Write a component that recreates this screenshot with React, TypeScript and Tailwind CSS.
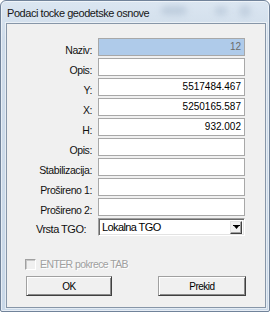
import React from "react";

const rows: { label: string; value?: string; tone?: "sel" }[] = [
  { label: "Naziv:", value: "12", tone: "sel" },
  { label: "Opis:" },
  { label: "Y:", value: "5517484.467" },
  { label: "X:", value: "5250165.587" },
  { label: "H:", value: "932.002" },
  { label: "Opis:" },
  { label: "Stabilizacija:" },
  { label: "Prošireno 1:" },
  { label: "Prošireno 2:" },
];

function ClassicButton({ children, className }: { children: React.ReactNode; className: string }) {
  return (
    <div
      className={`flex h-[20px] items-center justify-center border border-t-[#a0a0a0] border-l-[#a0a0a0] border-r-[#404040] border-b-[#404040] bg-[#f0f0f0] text-[10px] tracking-[-0.5px] text-black shadow-[inset_1px_1px_0_#ffffff,inset_-1px_-1px_0_#8a8a8a] ${className}`}
    >
      {children}
    </div>
  );
}

export default function App() {
  return (
    <div className="h-[313px] w-[272px] bg-white font-['Liberation_Sans',Arial,sans-serif]">
      <div className="relative flex h-[312px] w-[270px] flex-col rounded-t-[6px] rounded-b-[2px] border border-[#71839a] bg-[linear-gradient(180deg,#dbe6f1_0%,#cfdcea_12%,#c9d8e8_100%)] pb-[3px] pl-[5px] pr-[3px] shadow-[inset_0_0_0_1px_rgba(255,255,255,0.55)]">
        {/* blurred glass smudges */}
        <span className="absolute left-[160px] top-[5px] h-[9px] w-[26px] rounded-full bg-[#aebfd2] opacity-60 blur-[3px]" />
        <span className="absolute left-[214px] top-[6px] h-[8px] w-[12px] rounded-full bg-[#aebfd2] opacity-60 blur-[3px]" />
        <span className="absolute left-[238px] top-[4px] h-[12px] w-[12px] rounded-full bg-[#b3c3d5] opacity-60 blur-[3px]" />

        <div className="relative flex h-[22px] items-start pl-[1px] pt-[4px] text-[11px] leading-[16px] tracking-[-0.45px] text-[#161616]">
          Podaci tocke geodetske osnove
        </div>

        <div className="flex flex-1 flex-col border border-[#8796a8] bg-[#f0f0f0] shadow-[0_0_0_1px_rgba(255,255,255,0.5)]">
          <div className="flex flex-col gap-[2px] pt-[14px]">
            {rows.map((r, i) => (
              <div key={i} className="flex h-[18px]">
                <div className="w-[91px] pr-[6px] pt-[4px] text-right text-[10.5px] leading-[16px] tracking-[-0.4px] text-[#111]">
                  {r.label}
                </div>
                <div
                  className={`h-[18px] w-[147px] border border-[#a8a8a8] px-[3px] text-right text-[10px] leading-[16px] ${
                    r.tone === "sel" ? "bg-[#afcbea] text-[#6b6b6b]" : "bg-white text-black"
                  }`}
                >
                  {r.value}
                </div>
              </div>
            ))}
            <div className="flex h-[18px]">
              <div className="w-[91px] pl-[29px] pt-[3px] text-[11px] leading-[16px] tracking-[-0.5px] text-[#111]">
                Vrsta TGO:
              </div>
              <div className="flex h-[18px] w-[147px] items-center justify-between border border-t-[#a0a0a0] border-l-[#a0a0a0] border-r-[#ffffff] border-b-[#ffffff] bg-white pl-[2px] pr-[2px] shadow-[inset_1px_1px_0_#696969,inset_-1px_-1px_0_#e3e3e3]">
                <span className="pl-[1px] text-[11px] leading-[16px] tracking-[-0.6px] text-black">Lokalna TGO</span>
                <span className="flex h-[13px] w-[12px] items-center justify-center border border-t-[#e3e3e3] border-l-[#e3e3e3] border-r-[#404040] border-b-[#404040] bg-[#f0f0f0] shadow-[inset_-1px_-1px_0_#a0a0a0]">
                  <svg width="7" height="5" viewBox="0 0 7 5" aria-hidden="true">
                    <path d="M0 0h7v1H0zM1 1h5L3.5 4z" fill="#000" />
                  </svg>
                </span>
              </div>
            </div>
          </div>

          <div className="mt-[21px] flex items-center pl-[18px]">
            <span className="h-[11px] w-[11px] border border-t-[#a0a0a0] border-l-[#a0a0a0] border-r-white border-b-white bg-[#f0f0f0] shadow-[inset_1px_1px_0_#c8c8c8]" />
            <span className="pl-[4px] text-[10.5px] leading-[14px] tracking-[-0.6px] text-[#a0a0a0] [text-shadow:1px_1px_0_#ffffff]">
              ENTER pokrece TAB
            </span>
          </div>

          <div className="mt-[5px] flex pl-[19px]">
            <ClassicButton className="w-[86px]">OK</ClassicButton>
            <ClassicButton className="ml-[46px] w-[88px]">Prekid</ClassicButton>
          </div>
        </div>
      </div>
    </div>
  );
}
